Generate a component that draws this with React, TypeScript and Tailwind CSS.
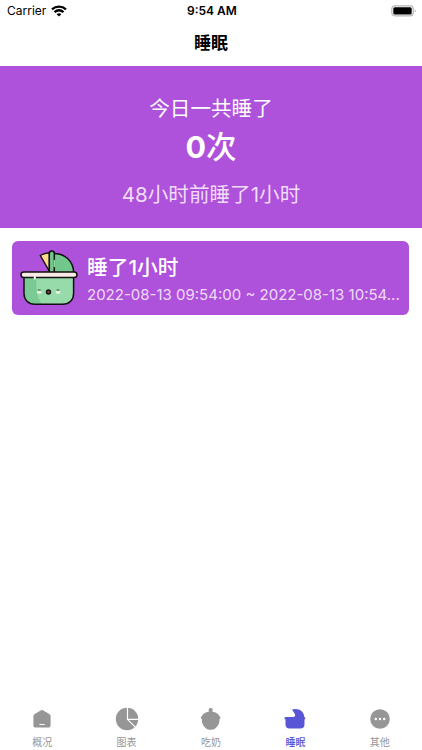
import type { ReactNode } from 'react';

interface SleepRecord {
  id: number;
  title: string;
  range: string;
}

interface TabItem {
  label: string;
  icon: ReactNode;
  active?: boolean;
}

const records: SleepRecord[] = [
  { id: 1, title: '睡了1小时', range: '2022-08-13 09:54:00 ~ 2022-08-13 10:54...' },
];

const WifiIcon = () => (
  <svg width="16" height="12" viewBox="0 0 16 12" fill="none" stroke="#000" strokeWidth="2.3">
    <path d="M1 4.4C5 .7 11 .7 15 4.4" />
    <path d="M3.5 7.2c2.7-2.4 6.3-2.4 9 0" />
    <path d="M8 11.6 5.6 9.2c1.4-1.2 3.4-1.2 4.8 0Z" fill="#000" stroke="none" />
  </svg>
);

const BatteryIcon = () => (
  <svg width="26" height="12" viewBox="0 0 26 12">
    <rect x="0.8" y="0.8" width="21.4" height="10" rx="3" fill="#fff" stroke="#b5b5b5" strokeWidth="1.2" />
    <rect x="2.3" y="2.2" width="18.4" height="7.3" rx="1.5" fill="#000" />
    <path d="M23.7 4.2c1.3.5 1.3 2.8 0 3.3Z" fill="#a5a5a5" />
  </svg>
);

const CarriageIcon = () => (
  <svg width="58" height="56" viewBox="0 0 58 56" className="shrink-0" strokeLinecap="round" strokeLinejoin="round">
    {/* hood */}
    <path d="M33 22V3.500c11.500-.5 20.600 7.500 20.600 19.500H33Z" fill="#72c78d" stroke="#111" strokeWidth="1.500" />
    <path d="M29.500 21.500 20.300 5.500c2.500-1.700 5.500-2.600 9.200-2.800Z" fill="#ffd88c" stroke="#111" strokeWidth="1.500" />
    <path d="M29.300 23V3.200c0-3 5-3 5 0V23Z" fill="#72c78d" stroke="#111" strokeWidth="1.500" />
    <path d="M34.300 10.500v6" stroke="#8ad7a0" strokeWidth="1.600" />
    {/* basket */}
    <path d="M4 26h49.600v17.500c0 6.400-4.400 10.800-10.800 10.800h-28C8.400 54.300 4 49.900 4 43.500Z" fill="#98dbaa" />
    <path d="M4 26h13c-1.500 9-1 20 5 28.300h-7.200C8.400 54.300 4 49.900 4 43.500Z" fill="#7acb93" />
    <path d="M4 26h49.600v17.500c0 6.400-4.400 10.800-10.800 10.800h-28C8.400 54.300 4 49.900 4 43.500Z" fill="none" stroke="#111" strokeWidth="1.500" />
    {/* rim */}
    <rect x="1" y="22" width="56" height="5.600" rx="2.800" fill="#fbe9e6" stroke="#111" strokeWidth="1.500" />
    <path d="M14.800 27v1.500" stroke="#fff" strokeWidth="2" />
    {/* face */}
    <ellipse cx="19.300" cy="42.300" rx="2.500" ry="1.500" fill="#e8f3df" />
    <ellipse cx="38" cy="42.300" rx="2.500" ry="1.500" fill="#e8f3df" />
    <path d="M18.300 40h2M37 40h2" fill="none" stroke="#27422f" strokeWidth="0.900" />
    <circle cx="28.500" cy="42" r="2" fill="#7a4b3c" stroke="#111" strokeWidth="1.400" />
  </svg>
);

const HomeTabIcon = () => (
  <svg width="24" height="24" viewBox="0 0 24 24">
    <path d="M10.700 3.400a2.500 2.500 0 0 1 2.600 0l6 3.700c.8.500 1.300 1.300 1.300 2.200v8.900c0 1.400-1 2.400-2.400 2.400H5.800c-1.400 0-2.400-1-2.400-2.400V9.300c0-.9.500-1.700 1.300-2.200Z" fill="currentColor" />
    <path d="M9.800 17.500h4.500" stroke="#fff" strokeWidth="1" strokeLinecap="round" />
  </svg>
);

const ChartTabIcon = () => (
  <svg width="24" height="24" viewBox="0 0 24 24">
    <circle cx="12" cy="12" r="11.200" fill="currentColor" />
    <path d="M12.500 0v12.300H24M12.500 12.300l8.500 8.500" fill="none" stroke="#fff" strokeWidth="1.200" />
  </svg>
);

const BottleTabIcon = () => (
  <svg width="24" height="24" viewBox="0 0 24 24" fill="currentColor">
    <path d="M9.700 2.700c0-2.300 3.900-2.300 3.900 0 0 1-.1 1.400-.1 2.100 3.400.6 5.900 2.100 7 4.500 1.300.2 1.300 2.600 0 2.800.3 4-1.400 7.500-4.600 9.600-2.300 1.500-6.200 1.500-8.500 0-3.200-2.100-4.900-5.600-4.600-9.600-1.300-.2-1.300-2.600 0-2.800 1.100-2.400 3.600-3.900 7-4.500 0-.7-.1-1.100-.1-2.100Z" />
  </svg>
);

const CribTabIcon = () => (
  <svg width="24" height="24" viewBox="0 0 24 24" fill="currentColor">
    <path d="M9 2.600c6.200-1.800 11.900 1.200 12.300 7.400 1.400.1 1.400 2.300.2 2.500v5c0 2.400-1.600 4.100-4 4.100H6.500c-2.400 0-4-1.700-4-4.100v-5c-1.400-.2-1.400-2.400 0-2.500h8c1.200 0 2.200-1.600 1.500-2.800Z" />
  </svg>
);

const MoreTabIcon = () => (
  <svg width="24" height="24" viewBox="0 0 24 24">
    <circle cx="12" cy="12" r="9.800" fill="currentColor" />
    <g fill="#fff">
      <circle cx="7.800" cy="12" r="1.200" />
      <circle cx="12" cy="12" r="1.200" />
      <circle cx="16.200" cy="12" r="1.200" />
    </g>
  </svg>
);

const tabs: TabItem[] = [
  { label: '概况', icon: <HomeTabIcon /> },
  { label: '图表', icon: <ChartTabIcon /> },
  { label: '吃奶', icon: <BottleTabIcon /> },
  { label: '睡眠', icon: <CribTabIcon />, active: true },
  { label: '其他', icon: <MoreTabIcon /> },
];

const StatusBar = () => (
  <div className="grid h-[22px] grid-cols-3 items-center pl-[7px] pr-[5px] leading-none">
    <div className="flex items-center gap-[5px]">
      <span className="text-[12px]">Carrier</span>
      <WifiIcon />
    </div>
    <span className="text-center text-[12px] font-semibold">9:54 AM</span>
    <div className="flex justify-end">
      <BatteryIcon />
    </div>
  </div>
);

const RecordCard = ({ record }: { record: SleepRecord }) => (
  <div className="flex h-[74px] items-center rounded-[6px] bg-[#ae51db] px-2 text-white">
    <CarriageIcon />
    <div className="ml-[9px] min-w-0 flex-1 pt-[3px]">
      <div className="text-[20.700px] leading-[28px] font-medium">{record.title}</div>
      <div className="mt-[3px] text-[15px] leading-[20px] whitespace-nowrap text-[#efdcf8]">{record.range}</div>
    </div>
  </div>
);

export default function App() {
  return (
    <div className="flex h-screen w-full flex-col overflow-hidden bg-white font-['Inter','Noto_Sans_CJK_SC',sans-serif] text-black">
      <StatusBar />
      <header className="flex h-[44px] items-center justify-center text-[17px] font-bold">睡眠</header>

      <section className="flex h-[162px] flex-col items-center bg-[#ae51db] pt-[28px] text-white">
        <div className="text-[20.600px] leading-[30px]">今日一共睡了</div>
        <div className="mt-[3px] text-[30.500px] leading-[40px] font-bold">
          0<span className="font-medium">次</span>
        </div>
        <div className="mt-[13px] text-[20.600px] leading-[30px] text-[#efdcf8]">48小时前睡了1小时</div>
      </section>

      <main className="flex-1 pt-[13px] pr-[13px] pl-3">
        {records.map(record => (
          <RecordCard key={record.id} record={record} />
        ))}
      </main>

      <nav className="grid h-[43px] grid-cols-5">
        {tabs.map(({ label, icon, active }) => (
          <div
            key={label}
            className={`flex flex-col items-center ${active ? 'font-medium text-[#5856d6]' : 'text-[#969696]'}`}
          >
            {icon}
            <span className="mt-[4px] text-[10px] leading-[14px]">{label}</span>
          </div>
        ))}
      </nav>
    </div>
  );
}
